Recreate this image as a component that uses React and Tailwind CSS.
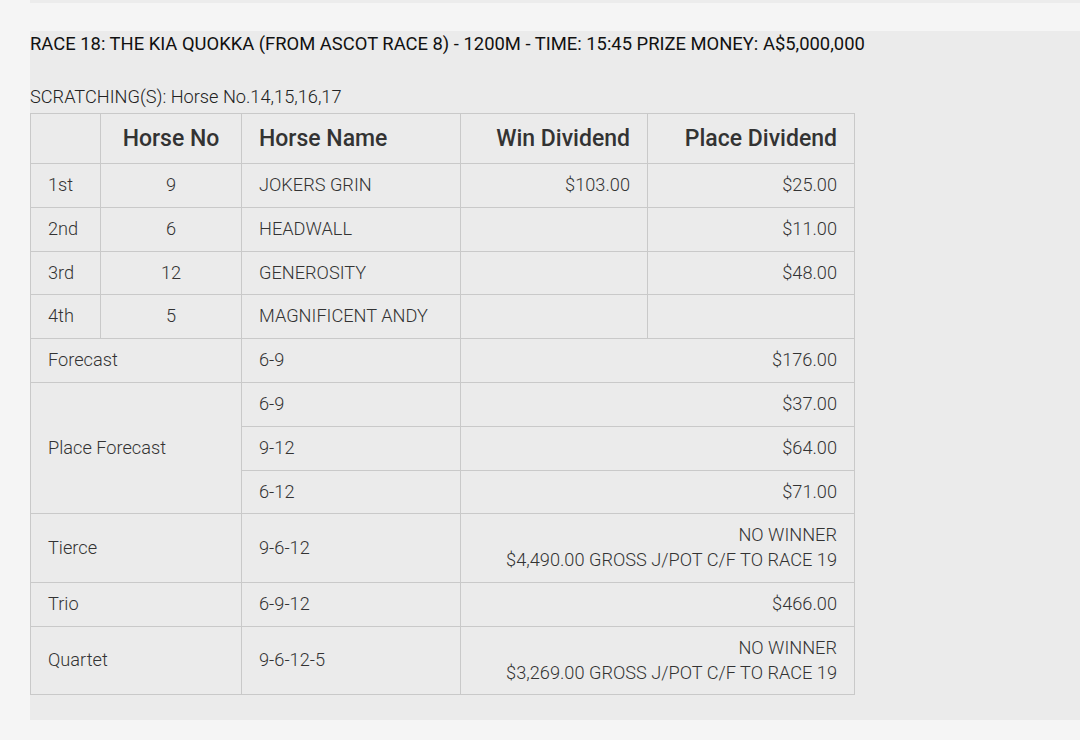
import React from "react";

const font = { fontFamily: "Roboto, 'Noto Sans', sans-serif" };

function Td({ children, className = "", ...rest }) {
  return (
    <td
      className={`border border-[#c9c9c9] px-[17px] py-[9px] leading-[24.8px] align-middle ${className}`}
      {...rest}
    >
      {children}
    </td>
  );
}

const th = "border border-[#c9c9c9] px-[17px] py-[9px] leading-[31px] font-medium";

export default function App() {
  const places = [
    ["1st", "9", "JOKERS GRIN", "$103.00", "$25.00"],
    ["2nd", "6", "HEADWALL", "", "$11.00"],
    ["3rd", "12", "GENEROSITY", "", "$48.00"],
    ["4th", "5", "MAGNIFICENT ANDY", "", ""],
  ];
  return (
    <div className="w-[1080px] h-[740px] bg-[#f5f5f5] overflow-hidden" style={font}>
      <div className="h-[3px] ml-[30px] bg-[#ececec]" />
      <div className="h-[28px]" />
      <div className="ml-[30px] bg-[#ebebeb] pt-[1px] pb-[25px] h-[689px]">
        <div className="text-[18.4px] leading-[24px] text-[#111] font-normal whitespace-nowrap">
          RACE 18: THE KIA QUOKKA (FROM ASCOT RACE 8) - 1200M - TIME: 15:45 PRIZE MONEY: A$5,000,000
        </div>
        <div className="mt-[29px] text-[18.2px] leading-[24px] text-[#222] font-light">
          SCRATCHING(S): Horse No.14,15,16,17
        </div>
        <table className="mt-[4px] border-collapse table-fixed w-[824px] text-[18.2px] font-light text-[#333]">
          <colgroup>
            <col className="w-[70px]" />
            <col className="w-[141px]" />
            <col className="w-[219px]" />
            <col className="w-[187px]" />
            <col className="w-[207px]" />
          </colgroup>
          <thead>
            <tr className="text-[23px] text-[#333]">
              <th className={th}></th>
              <th className={`${th} text-center`}>Horse No</th>
              <th className={`${th} text-left`}>Horse Name</th>
              <th className={`${th} text-right`}>Win Dividend</th>
              <th className={`${th} text-right`}>Place Dividend</th>
            </tr>
          </thead>
          <tbody>
            {places.map((r) => (
              <tr key={r[0]}>
                <Td>{r[0]}</Td>
                <Td className="text-center">{r[1]}</Td>
                <Td>{r[2]}</Td>
                <Td className="text-right">{r[3]}</Td>
                <Td className="text-right">{r[4]}</Td>
              </tr>
            ))}
            <tr>
              <Td colSpan={2}>Forecast</Td>
              <Td>6-9</Td>
              <Td colSpan={2} className="text-right">$176.00</Td>
            </tr>
            <tr>
              <Td colSpan={2} rowSpan={3}>Place Forecast</Td>
              <Td>6-9</Td>
              <Td colSpan={2} className="text-right">$37.00</Td>
            </tr>
            <tr>
              <Td>9-12</Td>
              <Td colSpan={2} className="text-right">$64.00</Td>
            </tr>
            <tr>
              <Td>6-12</Td>
              <Td colSpan={2} className="text-right">$71.00</Td>
            </tr>
            <tr>
              <Td colSpan={2}>Tierce</Td>
              <Td>9-6-12</Td>
              <Td colSpan={2} className="text-right">
                NO WINNER
                <br />
                $4,490.00 GROSS J/POT C/F TO RACE 19
              </Td>
            </tr>
            <tr>
              <Td colSpan={2}>Trio</Td>
              <Td>6-9-12</Td>
              <Td colSpan={2} className="text-right">$466.00</Td>
            </tr>
            <tr>
              <Td colSpan={2}>Quartet</Td>
              <Td>9-6-12-5</Td>
              <Td colSpan={2} className="text-right">
                NO WINNER
                <br />
                $3,269.00 GROSS J/POT C/F TO RACE 19
              </Td>
            </tr>
          </tbody>
        </table>
      </div>
    </div>
  );
}
